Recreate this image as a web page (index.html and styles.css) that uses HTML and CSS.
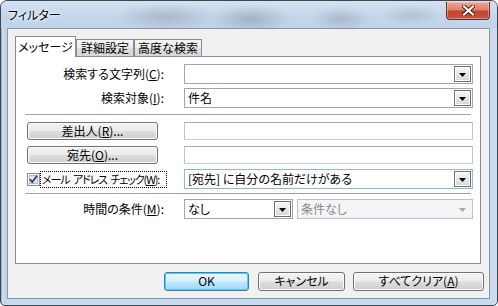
FILE: index.html
```html
<!DOCTYPE html>
<html lang="ja">
<head>
<meta charset="utf-8">
<title>フィルター</title>
<link rel="stylesheet" href="styles.css">
</head>
<body>
<div class="window">
  <div class="titlebar">
    <span class="title">フィルター</span>
    <div class="close" aria-label="閉じる">
      <svg width="13" height="11" viewBox="0 0 13 11">
        <path d="M2 1.5 L11 9.5 M11 1.5 L2 9.5" stroke="#4a1a12" stroke-width="4" stroke-linecap="square"/>
        <path d="M2 1.5 L11 9.5 M11 1.5 L2 9.5" stroke="#ffffff" stroke-width="2.2" stroke-linecap="square"/>
      </svg>
    </div>
  </div>
  <div class="client">
    <div class="tabs">
      <div class="tab active">メッセージ</div>
      <div class="tab t2">詳細設定</div>
      <div class="tab t3">高度な検索</div>
    </div>
    <div class="panel">
      <div class="row r1">
        <div class="lcell"><span class="lbl">検索する文字列(<u>C</u>):</span></div>
        <div class="combo wide"><span class="val"></span><span class="drop"><svg width="7" height="4" viewBox="0 0 7 4"><path d="M0 0H7L3.5 4Z" fill="#000"/></svg></span></div>
      </div>
      <div class="row r2">
        <div class="lcell"><span class="lbl">検索対象(<u>I</u>):</span></div>
        <div class="combo wide"><span class="val">件名</span><span class="drop"><svg width="7" height="4" viewBox="0 0 7 4"><path d="M0 0H7L3.5 4Z" fill="#000"/></svg></span></div>
      </div>
      <div class="sep s1"></div>
      <div class="row r3">
        <div class="lcell"><div class="btn pick">差出人(<u>R</u>)...</div></div>
        <div class="field"></div>
      </div>
      <div class="row r4">
        <div class="lcell"><div class="btn pick">宛先(<u>O</u>)...</div></div>
        <div class="field"></div>
      </div>
      <div class="row r5">
        <div class="lcell check">
          <span class="box"><svg width="13" height="13" viewBox="0 0 13 13"><rect x="0.5" y="0.5" width="12" height="12" fill="#f4f4f4" stroke="#8e8f8f"/><rect x="2.5" y="2.5" width="8" height="8" fill="#e4e6ea" stroke="#b5b9c1"/><path d="M3 6.2 L5.3 9 L10 2.8" fill="none" stroke="#2a3f7e" stroke-width="1.8"/></svg></span>
          <span class="focus">メール アドレス チェック(<u>W</u>):</span>
        </div>
        <div class="combo wide hot"><span class="val">[宛先] に自分の名前だけがある</span><span class="drop"><svg width="7" height="4" viewBox="0 0 7 4"><path d="M0 0H7L3.5 4Z" fill="#000"/></svg></span></div>
      </div>
      <div class="sep s2"></div>
      <div class="row r6">
        <div class="lcell"><span class="lbl">時間の条件(<u>M</u>):</span></div>
        <div class="combo small"><span class="val">なし</span><span class="drop"><svg width="7" height="4" viewBox="0 0 7 4"><path d="M0 0H7L3.5 4Z" fill="#000"/></svg></span></div>
        <div class="combo dis"><span class="val">条件なし</span><span class="drop flat"><svg width="7" height="4" viewBox="0 0 7 4"><path d="M0 0H7L3.5 4Z" fill="#a8a8a8"/></svg></span></div>
      </div>
    </div>
    <div class="actions">
      <div class="btn ok">OK</div>
      <div class="btn cancel">キャンセル</div>
      <div class="btn clear">すべてクリア(<u>A</u>)</div>
    </div>
  </div>
</div>
</body>
</html>
```

FILE: styles.css
```css
html, body {
  margin: 0;
  padding: 0;
  background: #ffffff;
}
body {
  font-family: "Noto Sans CJK JP", "Noto Sans", sans-serif;
  font-size: 12px;
  font-feature-settings: "palt" 1;
  color: #000;
}
u { text-decoration: underline; text-underline-offset: 1px; }

.window {
  width: 498px;
  height: 306px;
  box-sizing: border-box;
  border: 1px solid #3e4654;
  border-radius: 7px 7px 5px 5px;
  background:
    linear-gradient(to right, #8fa6c2 0, #dbe6f2 2px, #b9cde4 4px, #c9dbef 6px, #c9dbef 100%);
  display: flex;
  flex-direction: column;
  overflow: hidden;
}

.titlebar {
  height: 27px;
  flex: none;
  display: flex;
  align-items: flex-start;
  padding-left: 7px;
  background:
    radial-gradient(ellipse 50px 14px at 165px 16px, rgba(150,160,175,0.55), rgba(150,160,175,0) 100%),
    radial-gradient(ellipse 40px 14px at 250px 18px, rgba(120,135,155,0.45), rgba(120,135,155,0) 100%),
    radial-gradient(ellipse 30px 12px at 340px 18px, rgba(140,150,165,0.45), rgba(140,150,165,0) 100%),
    radial-gradient(ellipse 30px 10px at 410px 14px, rgba(150,160,175,0.4), rgba(150,160,175,0) 100%),
    linear-gradient(to bottom, #d3e1f1 0, #c3d6ec 60%, #bfd3ea 100%);
}
.title {
  margin-top: 5px;
  font-size: 12px;
  line-height: 17px;
  text-shadow: 0 0 5px #fff, 0 0 3px #fff;
}
.close {
  margin-left: auto;
  margin-right: 7px;
  margin-top: 1px;
  width: 44px;
  height: 18px;
  box-sizing: border-box;
  border: 1px solid #6e2a22;
  border-top: none;
  border-radius: 0 0 4px 4px;
  background: linear-gradient(to bottom, #e9a99b 0, #d8826f 45%, #c4432f 55%, #c9523b 100%);
  box-shadow: inset 0 0 0 1px rgba(255,210,200,0.45);
  display: flex;
  align-items: center;
  justify-content: center;
}

.client {
  margin: 0 7px 0 6px;
  height: 271px;
  flex: none;
  box-sizing: border-box;
  border: 1px solid #8796ab;
  background: #f0f0f0;
  padding: 7px 0 0 7px;
  display: flex;
  flex-direction: column;
}

.tabs {
  display: flex;
  align-items: flex-end;
  height: 20px;
  flex: none;
  position: relative;
  z-index: 1;
}
.tab {
  box-sizing: border-box;
  height: 17px;
  border: 1px solid #898c95;
  border-bottom: none;
  text-align: center;
  line-height: 16px;
  background: linear-gradient(to bottom, #f4f4f4 0, #ececec 50%, #dedede 51%, #d6d6d6 100%);
}
.tab.active {
  width: 61px;
  height: 21px;
  margin-bottom: -1px;
  background: #ffffff;
  line-height: 19px;
}
.tab.t2 { width: 58px; }
.tab.t3 { width: 68px; }

.panel {
  margin-right: 8px;
  height: 208px;
  flex: none;
  box-sizing: border-box;
  border: 1px solid #898c95;
  background: #ffffff;
  display: flex;
  flex-direction: column;
}

.row {
  display: flex;
  align-items: center;
  flex: none;
}
.r1 { margin-top: 7px; }
.r2 { margin-top: 4px; }
.s1 { margin-top: 6px; }
.r3 { margin-top: 6px; }
.r4 { margin-top: 6px; }
.r5 { margin-top: 5px; }
.s2 { margin-top: 4px; }
.r6 { margin-top: 4px; }

.lcell {
  width: 168px;
  flex: none;
  box-sizing: border-box;
  text-align: right;
  padding-right: 20px;
  display: flex;
  justify-content: flex-end;
  align-items: center;
}
.lbl { line-height: 16px; }

.sep {
  margin-left: 9px;
  margin-right: 9px;
  height: 0;
  border-top: 1px solid #a0a0a0;
  border-bottom: 1px solid #ffffff;
  flex: none;
}

.combo {
  height: 20px;
  box-sizing: border-box;
  border: 1px solid #a5a5a5;
  background: #ffffff;
  display: flex;
  align-items: center;
  padding-left: 3px;
}
.combo.wide { width: 289px; }
.combo.small { width: 109px; }
.combo.dis {
  width: 176px;
  margin-left: 4px;
  background: #f4f5f7;
  border-color: #b4c1d3;
  color: #8a8a8a;
}
.combo.hot { border-color: #8fb6e3; }
.val {
  flex: 1;
  line-height: 16px;
  white-space: nowrap;
  overflow: hidden;
}
.drop {
  width: 17px;
  height: 16px;
  margin-right: 1px;
  box-sizing: border-box;
  border: 1px solid #6f6f6f;
  background: linear-gradient(to bottom, #f7f7f7 0, #e6e6e6 50%, #d7d7d7 100%);
  box-shadow: inset 0 0 0 1px #ffffff;
  display: flex;
  align-items: center;
  justify-content: center;
  flex: none;
}
.drop svg { margin-top: 1px; }
.drop.flat {
  border: none;
  background: none;
  box-shadow: none;
}

.field {
  width: 289px;
  height: 18px;
  box-sizing: border-box;
  border: 1px solid #abadb3;
  border-color: #a2a6ad #c3c7cd #c8ccd2 #c3c7cd;
  background: #ffffff;
}

.btn {
  box-sizing: border-box;
  height: 18px;
  border: 1px solid #707070;
  border-radius: 3px;
  background: linear-gradient(to bottom, #f3f3f3 0, #ebebeb 48%, #dddddd 52%, #cfcfcf 100%);
  box-shadow: inset 0 0 0 1px #fcfcfc;
  text-align: center;
  line-height: 15px;
  white-space: nowrap;
}
.lcell .btn.pick {
  width: 131px;
  margin-left: 11px;
  margin-right: -9px;
  flex: none;
}
.lcell:has(.pick) {
  justify-content: flex-start;
}

.check {
  justify-content: flex-start;
  padding-left: 11px;
}
.box {
  width: 13px;
  height: 13px;
  display: block;
  flex: none;
}
.box svg { display: block; }
.focus {
  width: 127px;
  height: 17px;
  box-sizing: border-box;
  border: 1px dotted #000;
  font-size: 11px;
  line-height: 15px;
  text-align: left;
  padding-left: 1px;
  white-space: pre;
  letter-spacing: -1.1px;
  word-spacing: 2px;
  flex: none;
}

.actions {
  display: flex;
  justify-content: flex-end;
  margin-top: 8px;
  padding-right: 5px;
  flex: none;
}
.actions .btn {
  height: 19px;
  line-height: 16px;
}
.btn.ok {
  width: 85px;
  border-color: #3c7fb1;
  background: linear-gradient(to bottom, #eaf6fd 0, #d9f0fc 48%, #bee6fd 52%, #a7d9f5 100%);
  box-shadow: inset 0 0 0 1px #48d0fb;
}
.btn.cancel {
  width: 87px;
  margin-left: 9px;
}
.btn.clear {
  width: 131px;
  margin-left: 8px;
}
```
